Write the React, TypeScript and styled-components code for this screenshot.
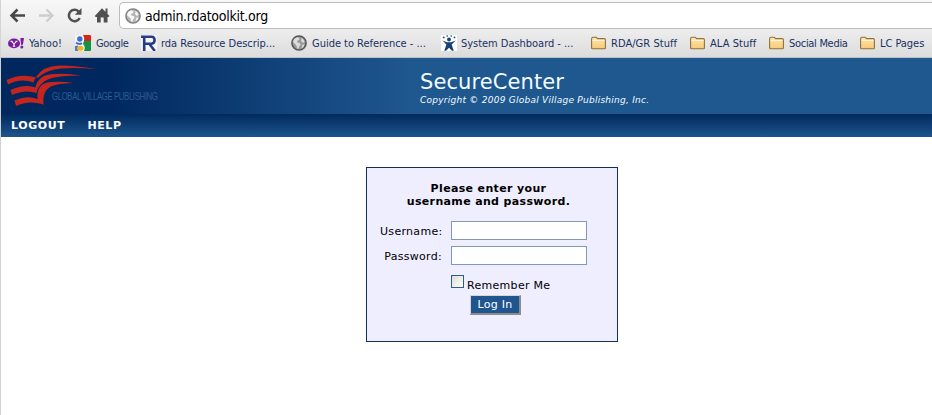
import React from "react";
import styled, { createGlobalStyle } from "styled-components";

const GlobalStyle = createGlobalStyle`
  * { box-sizing: border-box; }
  html, body { margin: 0; background: #fff; overflow: hidden; }
`;

const tahoma = `"DejaVu Sans Condensed", "DejaVu Sans", sans-serif`;
const verdana = `"DejaVu Sans", sans-serif`;

const Window = styled.div`
  width: 932px;
  height: 415px;
  overflow: hidden;
  display: flex;
  flex-direction: column;
  background: #fff;
`;

const Chrome = styled.div`
  flex: none;
  height: 58px;
  background: linear-gradient(#f7f7f7, #ededed 30px, #dcdcdc 57px);
  border-bottom: 1px solid #b9c3d0;
  border-left: 1px solid #d4d4d4;
`;

const Toolbar = styled.div`
  height: 29px;
  padding: 2px 0 0 8px;
  display: flex;
`;

const ToolButton = styled.div<{ $w: number }>`
  width: ${(p) => p.$w}px;
  height: 27px;
  flex: none;
  svg { display: block; }
`;

const AddressBar = styled.div`
  flex: 1;
  height: 27px;
  background: #fff;
  border: 1px solid #bdbdbd;
  border-right: 0;
  border-radius: 5px 0 0 5px;
  display: flex;
  align-items: center;
  padding-left: 5px;
  gap: 4px;
`;

const Address = styled.span`
  font: 14px/20px ${tahoma};
  letter-spacing: -0.27px;
  color: #000;
  white-space: nowrap;
`;

const Bookmarks = styled.div`
  display: flex;
  height: 28px;
  padding-left: 7px;
`;

const Bookmark = styled.div<{ $w: number; $gap: number }>`
  flex: none;
  width: ${(p) => p.$w}px;
  display: flex;
  align-items: center;
  gap: ${(p) => p.$gap}px;
  svg { flex: none; }
`;

const BookmarkLabel = styled.span<{ $ls: number }>`
  font: 11px/14px ${tahoma};
  letter-spacing: ${(p) => p.$ls}px;
  padding-top: 1px;
  color: #183063;
  white-space: nowrap;
`;

const Page = styled.div`
  flex: 1;
  border-left: 1px solid #d0d0d0;
  display: flex;
  flex-direction: column;
`;

const Banner = styled.header`
  height: 56px;
  flex: none;
  display: flex;
  background: linear-gradient(90deg, #00285e 0, #00285e 110px, #1f578f 410px, #1f578f 100%);
`;

const Brand = styled.div`
  width: 419px;
  flex: none;
  display: flex;
  svg { flex: none; }
`;

const BrandName = styled.span`
  margin: 31px 0 0 -45px;
  font: 11px/14px "Liberation Sans", sans-serif;
  letter-spacing: -0.55px;
  transform: scaleX(0.71);
  transform-origin: 0 0;
  color: #2c5a91;
  white-space: nowrap;
`;

const Titles = styled.div`
  padding-top: 12px;
  font-family: ${verdana};
  color: #f2fbff;
  white-space: nowrap;
`;

const Title = styled.h1`
  margin: 0 0 -1px;
  font-size: 21px;
  line-height: 25px;
  font-weight: 400;
  letter-spacing: 0.1px;
`;

const Copyright = styled.div`
  font-size: 9px;
  line-height: 12px;
  font-style: italic;
  letter-spacing: 0.25px;
`;

const Nav = styled.nav`
  height: 23px;
  flex: none;
  display: flex;
  gap: 22px;
  padding-left: 10px;
  background: linear-gradient(#002a5e, #1d548d);
`;

const NavLink = styled.a`
  font: bold 11px/23px ${verdana};
  letter-spacing: 0.6px;
  color: #fff;
`;

const LoginBox = styled.form`
  margin: 30px 0 0 365px;
  width: 252px;
  height: 175px;
  background: #eeeeff;
  border: 1px solid #0f2f5c;
  padding: 14px 0 0 13px;
  font: 11px/13px ${verdana};
  color: #000;
`;

const Prompt = styled.div`
  width: 217px;
  text-align: center;
  font-weight: bold;
  margin-bottom: 13px;
  letter-spacing: 0.35px;
`;

const Field = styled.label`
  display: flex;
  align-items: center;
  height: 19px;
  margin-bottom: 6px;
`;

const FieldName = styled.span`
  width: 62px;
  text-align: right;
  margin: 1px 9px 0 0;
  letter-spacing: 0.3px;
  white-space: nowrap;
`;

const Input = styled.input`
  width: 136px;
  height: 19px;
  background: #fff;
  border: 1px solid #8199b5;
  padding: 1px 3px;
  outline: 0;
`;

const Remember = styled.label`
  display: flex;
  margin: 11px 0 0 71px;
  height: 18px;
  gap: 3px;
  letter-spacing: 0.3px;
  line-height: 20px;
  white-space: nowrap;
`;

const CheckSquare = styled.input`
  appearance: none;
  margin: -1px 0 0;
  width: 13px;
  height: 13px;
  border: 1px solid #2f5d8c;
  background: linear-gradient(135deg, #dcdcd7, #fff);
`;

const LoginButton = styled.button`
  display: block;
  margin: 1px 0 0 90px;
  width: 51px;
  height: 20px;
  padding: 1px 0 0;
  background: #1f568f;
  border: 2px solid;
  border-color: #d8d5d0 #8c8c8c #8c8c8c #d8d5d0;
  border-width: 1px 2px 2px 1px;
  color: #fff;
  font: 11px/16px ${verdana};
  letter-spacing: 0.3px;
`;

const GlobeIcon = ({ size, dark }: { size: number; dark?: boolean }) => (
  <svg width={size} height={size} viewBox="0 0 16 16">
    <circle cx="8" cy="8" r="7.1" fill={dark ? "#999" : "#b5b5b5"} stroke={dark ? "#555" : "#828282"} strokeWidth="1.5" />
    <path d="M3 4 6 2.3 8.5 3 8 5 6 6 6.5 7.5 9 8.3 9.5 10 8 11.5 7.5 14 6 13 5.5 10.5 3.5 8.5 2 7zM10 3l2 1 1.5 2.5L12 8l-2-2 .5-1.5zM11.5 9.5l2 .3-1.5 2.7-1.5.5z" fill={dark ? "#ddd" : "#f7f7f7"} />
  </svg>
);

const FolderIcon = () => (
  <svg width="15" height="14" viewBox="0 0 15 14">
    <defs>
      <linearGradient id="folder" x2="0" y2="1">
        <stop stopColor="#ffe8ac" />
        <stop offset="1" stopColor="#f7c878" />
      </linearGradient>
    </defs>
    <path d="M.6 12V3Q.6 1.2 2 1.2H5.3L6.5 2.6H13.2Q14.4 2.6 14.4 4V12Q14.4 12.8 13.4 12.8H1.6Q.6 12.8.6 12z" fill="url(#folder)" stroke="#8f7040" strokeWidth="1.1" />
    <path d="M1.4 4.4H13.6" stroke="#fff5d7" />
  </svg>
);

const YahooIcon = () => (
  <svg width="17" height="16" viewBox="0 0 17 16">
    <ellipse cx="6" cy="8.4" rx="6" ry="4.9" fill="#7b1a9e" />
    <path d="M3.2 6.2 6 8.8 8.8 6.2M6 8.8V11.3M2.4 6.2H4.6M7.4 6.2H9.6M4.8 11.2H7.2" stroke="#fff" strokeWidth="1.1" fill="none" />
    <path d="M12.4 3H16L14.9 9.8H13z" fill="#7b1a9e" />
    <circle cx="13.8" cy="12.1" r="1.5" fill="#7b1a9e" />
  </svg>
);

const GoogleIcon = () => (
  <svg width="16" height="16" viewBox="0 0 16 16">
    <path d="M0 0H16V16H0z" fill="#f4f4f4" />
    <path d="M8 0H15Q16 0 16 1V6H9Q10 3 8 0z" fill="#d8251c" />
    <path d="M9 6H16V15Q16 16 15 16H9Q11 12 8 9z" fill="#149246" />
    <path d="M0 11 3 10.5V16H1Q0 16 0 15z" fill="#4b78d0" />
    <circle cx="4.8" cy="4" r="2.7" fill="#3d6dcb" />
    <path d="M1 7.5Q4 10 7 8.2" stroke="#3d6dcb" strokeWidth="2" fill="none" />
    <ellipse cx="5.3" cy="13.3" rx="3.2" ry="2.5" fill="#f4b51e" />
  </svg>
);

const RdaIcon = () => (
  <svg width="16" height="16" viewBox="0 0 16 16">
    <path d="M0 0H16V16H0z" fill="#f5f6fb" />
    <path d="M0 1.7H10.5Q13.6 1.7 13.6 5T10.5 8.7H4M3.2 1.5V16M8.5 9 13.8 16" stroke="#273c82" strokeWidth="2.6" fill="none" />
  </svg>
);

const JiraIcon = () => (
  <svg width="16" height="16" viewBox="0 0 16 16">
    <path d="M0 0H16V16H0z" fill="#fff" />
    <g fill="#164274">
      <circle cx="2.7" cy="2.4" r=".9" />
      <circle cx="6.2" cy="1" r=".8" />
      <circle cx="10.2" cy="1" r=".8" />
      <circle cx="13.5" cy="2.4" r=".9" />
      <circle cx="8" cy="4.5" r="1.9" />
      <path d="M1.5 5.6 6 7.2H10L14.7 5.6 10.7 9.6 12.7 15.7H11L8 12.8 5 15.7H3.3L5.4 9.6z" />
    </g>
  </svg>
);

const BirdLogo = () => (
  <svg width="96" height="56" viewBox="0 0 96 56">
    <g fill="#c4261f">
      <path d="M5.5 22Q20 15 35 19.5Q33 22 32.5 24.5Q20 19.5 7 26.5z" />
      <path d="M35 19Q42 8 58 7.5Q75 7.5 95 11Q75 9.5 60 10.5Q46 12 39 18Q37 21 35 19z" />
      <path d="M9.5 32Q24 25.500 34.500 29.500Q37 17 52 16Q66 15 80 17.500Q62 17.500 53 19.500Q38 23 35.500 35Q24 31 11 37z" />
      <path d="M13.500 42.500Q26 37 36.500 41Q35 25 50 24Q61 23 72 25Q57 25.500 51 28Q41 32 42.500 47L41 46Q27 42 15 48z" />
    </g>
  </svg>
);

const bookmarks = [
  { label: "Yahoo!", icon: <YahooIcon />, w: 67, gap: 4, ls: 0 },
  { label: "Google", icon: <GoogleIcon />, w: 66, gap: 5, ls: -0.4 },
  { label: "rda Resource Descrip...", icon: <RdaIcon />, w: 150, gap: 4, ls: -0.02 },
  { label: "Guide to Reference - ...", icon: <GlobeIcon size={16} dark />, w: 150, gap: 5, ls: -0.02 },
  { label: "System Dashboard - ...", icon: <JiraIcon />, w: 150, gap: 4, ls: -0.03 },
  { label: "RDA/GR Stuff", icon: <FolderIcon />, w: 99, gap: 5, ls: 0.05 },
  { label: "ALA Stuff", icon: <FolderIcon />, w: 79, gap: 5, ls: 0.05 },
  { label: "Social Media", icon: <FolderIcon />, w: 91, gap: 5, ls: -0.3 },
  { label: "LC Pages", icon: <FolderIcon />, w: 72, gap: 5, ls: -0.05 },
];

export default function App() {
  return (
    <Window>
      <GlobalStyle />
      <Chrome>
        <Toolbar>
          <ToolButton $w={29}>
            <svg width="18" height="27" fill="none" stroke="#484848" strokeWidth="2.5">
              <path d="M2.5 13.5H16M8.5 7.5 2.5 13.5 8.5 19.5" />
            </svg>
          </ToolButton>
          <ToolButton $w={28}>
            <svg width="18" height="27" fill="none" stroke="#cdcdcd" strokeWidth="2.3">
              <path d="M1 13.5H14M8.5 7.5 14.5 13.5 8.5 19.5" />
            </svg>
          </ToolButton>
          <ToolButton $w={28}>
            <svg width="18" height="27">
              <path d="M13.7 16A5.7 5.7 0 1 1 12.500 9.300" fill="none" stroke="#505050" strokeWidth="2.5" />
              <path d="M15.500 6V12.700H8.800z" fill="#505050" />
            </svg>
          </ToolButton>
          <ToolButton $w={25}>
            <svg width="18" height="27" fill="#505050">
              <path d="M.8 14 8 6.2 11.5 9.8V6.5H13.5V12L15.5 14 14.5 15H13.5V20.5H9.7V15.5H6.7V20.5H3V15H1.7z" />
            </svg>
          </ToolButton>
          <AddressBar>
            <GlobeIcon size={16} />
            <Address>admin.rdatoolkit.org</Address>
          </AddressBar>
        </Toolbar>
        <Bookmarks>
          {bookmarks.map((b) => (
            <Bookmark key={b.label} $w={b.w} $gap={b.gap}>
              {b.icon}
              <BookmarkLabel $ls={b.ls}>{b.label}</BookmarkLabel>
            </Bookmark>
          ))}
        </Bookmarks>
      </Chrome>
      <Page>
        <Banner>
          <Brand>
            <BirdLogo />
            <BrandName>GLOBAL VILLAGE PUBLISHING</BrandName>
          </Brand>
          <Titles>
            <Title>SecureCenter</Title>
            <Copyright>Copyright © 2009 Global Village Publishing, Inc.</Copyright>
          </Titles>
        </Banner>
        <Nav>
          <NavLink>LOGOUT</NavLink>
          <NavLink>HELP</NavLink>
        </Nav>
        <LoginBox>
          <Prompt>
            Please enter your
            <br />
            username and password.
          </Prompt>
          <Field>
            <FieldName>Username:</FieldName>
            <Input type="text" />
          </Field>
          <Field>
            <FieldName>Password:</FieldName>
            <Input type="password" />
          </Field>
          <Remember>
            <CheckSquare type="checkbox" />
            Remember Me
          </Remember>
          <LoginButton type="button">Log In</LoginButton>
        </LoginBox>
      </Page>
    </Window>
  );
}
